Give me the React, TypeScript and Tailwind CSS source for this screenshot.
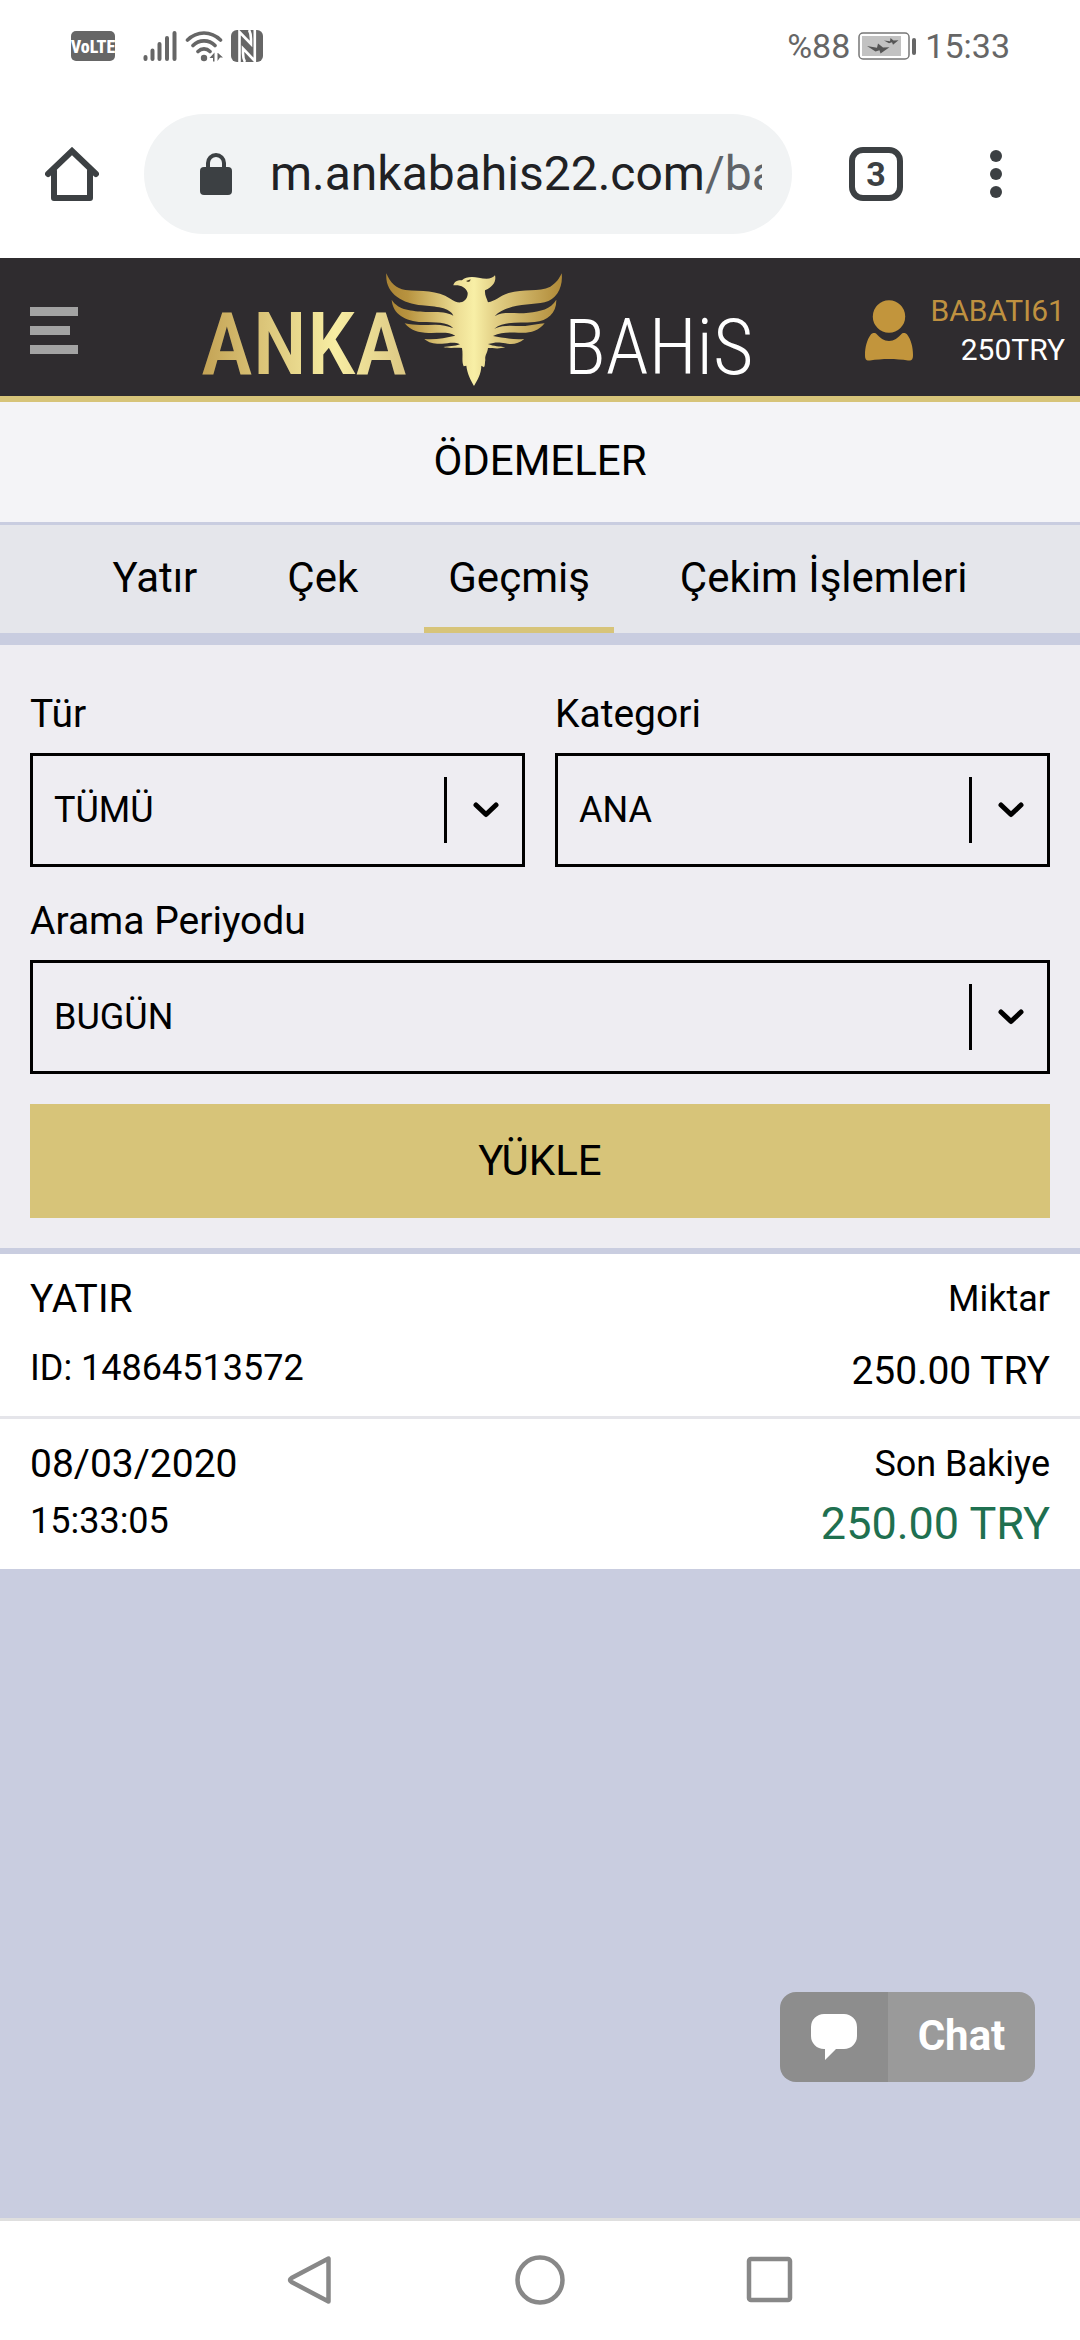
import { useState } from "react";

const tabs = ["Yatır", "Çek", "Geçmiş", "Çekim İşlemleri"];

const SignalIcon = () => (
  <svg width="34" height="32" viewBox="0 0 34 32" stroke="#666" strokeWidth="4" strokeLinecap="round">
    <path d="M2.500 27v2M9.500 20.500v8.500M16.500 14v15M24 8v21M31.500 3v26" />
  </svg>
);

const WifiIcon = () => (
  <svg width="38" height="32" viewBox="0 0 38 32" fill="none" stroke="#666" strokeWidth="3.6" strokeLinecap="round">
    <path d="M2.500 10C12 .6 26 .6 35.500 10M8 15.500C14 9.300 24 9.300 30 15.500M13 21.500C16.500 18 21.500 18 25 21.500" />
    <circle cx="19" cy="28" r="3.200" fill="#666" stroke="none" />
    <path d="M24.500 28l5-5.500v9h-1.500v-3.500zM33 23l5 4.500h-3L32.500 31V23z" fill="#666" stroke="none" />
  </svg>
);

const NfcIcon = () => (
  <svg width="32" height="32" viewBox="0 0 32 32">
    <rect width="32" height="32" rx="6" fill="#666" />
    <path d="M8.500 32V2l11.500 12V9c0-4-.5-6.500-2-9M23.800 0v31L12 18.500V23c0 4 .5 6.500 2 9" fill="none" stroke="#fff" strokeWidth="2.600" />
  </svg>
);

const BatteryIcon = () => (
  <svg width="59" height="30" viewBox="0 0 59 30">
    <rect x="1" y="2" width="50" height="26" rx="4" fill="#fff" stroke="#777" strokeWidth="1.500" />
    <rect x="4" y="5" width="39" height="20" fill="#c2c2c2" />
    <path d="M9 15l10 1.800 1-4.300 5 4 6.500-.3-9 6.300-1-3.200-4 1.200zM26 9.500l6 .8.500-3.300 3 2.500 5-.3-5.500 4.500-1-2.500-3 1z" fill="#555" />
    <rect x="54" y="7" width="4" height="17" rx="2" fill="#666" />
  </svg>
);

const HomeIcon = () => (
  <svg width="54" height="54" viewBox="0 0 54 54" fill="none" stroke="#3c4043" strokeWidth="6" strokeLinejoin="round" strokeLinecap="round">
    <path d="M3 27L27 4l24 23" strokeLinejoin="miter" />
    <path d="M9 24v27h36V24" />
  </svg>
);

const LockIcon = () => (
  <svg className="shrink-0" width="32" height="42" viewBox="0 0 32 42">
    <rect y="14" width="32" height="28" rx="4" fill="#3c4043" />
    <path d="M8 16V10a8 8 0 0 1 16 0v6" fill="none" stroke="#3c4043" strokeWidth="4" />
  </svg>
);

const UserIcon = () => (
  <svg width="48" height="61" viewBox="0 0 48 61" fill="#c2953c">
    <circle cx="24" cy="16.500" r="16.200" />
    <path d="M11 33.500C15 38 19 41 24 41s9-3 13-7.500c2-1 4-.5 5.500 1.500C46 40 48 47 48 55c0 4-1 6-5 5.500-12-2-26-2-38 0C1 61 0 59 0 55c0-8 2-15 5.500-20 1.500-2 3.500-2.500 5.500-1.500z" />
  </svg>
);

const Logo = () => (
  <svg width="550" height="124" viewBox="0 0 550 124" role="img" aria-label="Anka Bahis">
    <defs>
      <linearGradient id="word" x1="0" x2="1">
        <stop offset="0" stopColor="#c3a254" />
        <stop offset="0.65" stopColor="#f7eda3" />
        <stop offset="1" stopColor="#dcc783" />
      </linearGradient>
      <linearGradient id="bird" x1="0" x2="1">
        <stop offset="0" stopColor="#a98334" />
        <stop offset="0.12" stopColor="#b8933f" />
        <stop offset="0.42" stopColor="#efe198" />
        <stop offset="0.5" stopColor="#f8efa6" />
        <stop offset="0.62" stopColor="#e2cf85" />
        <stop offset="1" stopColor="#b08a38" />
      </linearGradient>
    </defs>
    <text x="1" y="106" fontSize="88" fontWeight="500" fill="url(#word)" className="font-['Roboto_Condensed',Lato,sans-serif]">
      ANKA
    </text>
    <path
      transform="translate(182 0) scale(0.3333)"
      fill="url(#bird)"
      d="M13 16C24 44 42 62 70 66C120 70 165 66 205 92C216 100 226 104 236 103C250 100 258 88 257 74C252 58 236 50 214 52C216 42 226 36 240 37C250 26 270 26 290 29C312 34 330 34 339 22C344 40 332 58 309 67C308 82 314 90 318 103C340 100 352 84 380 75C425 62 470 72 505 56C522 46 532 32 539 16C544 58 524 94 488 103C440 112 370 108 338 145C366 128 400 140 440 134C475 130 506 124 523 95C524 134 498 158 458 162C410 166 366 158 337 182C370 168 400 176 430 174C450 172 470 168 488 166C468 192 440 196 410 194C380 193 358 192 333 204C360 208 390 216 427 213C410 228 390 230 370 226C350 222 340 222 318 228C336 236 352 234 370 238C350 244 332 240 318 240C316 256 308 262 310 276C308 284 310 292 306 298L298 293C298 318 286 336 276 354C266 336 256 318 253 293L245 295C238 280 244 262 240 240C220 238 200 242 184 237C200 234 218 236 234 229C216 220 200 226 180 227C160 228 142 226 127 213C160 216 190 210 220 203C200 190 170 196 140 195C110 194 86 188 68 166C100 174 130 170 160 170C180 170 196 174 214 181C196 160 160 164 120 162C70 160 32 138 29 95C50 128 90 128 130 132C160 132 190 130 214 143C204 118 160 116 120 112C60 106 8 76 13 16Z"
    />
    <path transform="translate(182 0) scale(0.3333)" d="M252 39l14-5-2 6-6 2z" fill="#4a3d22" />
    <text x="364" y="106" fontSize="78" fontWeight="300" fill="#fff" className="font-['Roboto_Condensed',Lato,sans-serif]">
      BAHiS
    </text>
  </svg>
);

type FieldProps = { id: string; label: string; options: string[] };

const SelectField = ({ id, label, options }: FieldProps) => (
  <div className="flex flex-1 flex-col gap-4">
    <label htmlFor={id} className="text-[39px] leading-[46px]">
      {label}
    </label>
    <div className="relative">
      <select
        id={id}
        className="h-[114px] w-full appearance-none rounded-none border-[3px] border-black bg-transparent pr-20 pl-[21px] text-[36px]"
      >
        {options.map((option) => (
          <option key={option}>{option}</option>
        ))}
      </select>
      <div className="pointer-events-none absolute inset-y-6 right-0 flex w-[81px] items-center justify-center border-l-[3px] border-black">
        <svg width="26" height="16" viewBox="0 0 26 16" fill="none" stroke="#000" strokeWidth="5" strokeLinecap="round" strokeLinejoin="round">
          <path d="M3 3l10 9.500L23 3" />
        </svg>
      </div>
    </div>
  </div>
);

const StatusBar = () => (
  <div className="flex h-[92px] items-center justify-between pr-[70px] pl-[71px] text-[34px] text-[#666]">
    <div className="flex items-center">
      <span className="mr-7 flex h-[30px] w-11 items-center justify-center rounded-[5px] bg-[#666] font-['Roboto_Condensed',sans-serif] text-[18px] font-extrabold text-white">
        VoLTE
      </span>
      <div className="flex items-center gap-2">
        <SignalIcon />
        <WifiIcon />
        <NfcIcon />
      </div>
    </div>
    <div className="flex items-center gap-2">
      <span>%88</span>
      <BatteryIcon />
      <span>15:33</span>
    </div>
  </div>
);

const BrowserBar = () => (
  <div className="flex h-[166px] items-center pr-[78px] pb-[2px] pl-[45px]">
    <button aria-label="Home" className="mr-[45px]">
      <HomeIcon />
    </button>
    <div className="flex h-[120px] min-w-0 flex-1 items-center rounded-full bg-[#f1f3f4] pr-[30px] pl-14">
      <LockIcon />
      <a href="#" className="ml-[38px] flex-1 overflow-hidden text-[48px] whitespace-nowrap text-[#202124]">
        m.ankabahis22.com<span className="text-[#5f6368]">/ba</span>
      </a>
    </div>
    <button
      aria-label="Tabs"
      className="ml-[57px] flex size-[54px] items-center justify-center rounded-[14px] border-[6px] border-[#3c4043] text-[34px] leading-none font-bold text-[#3c4043]"
    >
      3
    </button>
    <button aria-label="Menu" className="ml-[87px] flex flex-col gap-[6px]">
      <span className="size-3 rounded-full bg-[#3c4043]" />
      <span className="size-3 rounded-full bg-[#3c4043]" />
      <span className="size-3 rounded-full bg-[#3c4043]" />
    </button>
  </div>
);

export default function App() {
  const [activeTab, setActiveTab] = useState("Geçmiş");

  return (
    <div className="flex min-h-screen flex-col bg-white font-[Roboto,sans-serif] text-black">
      <StatusBar />
      <BrowserBar />

      <header className="flex h-36 items-center justify-between border-b-[6px] border-[#d7c479] bg-[#2f2c2f] pt-[6px] pr-[15px] pl-[30px]">
        <button aria-label="Menü" className="flex w-14 flex-col gap-[10px]">
          <span className="h-[9px] w-12 bg-[#a3a3a3]" />
          <span className="h-[9px] w-10 bg-[#a3a3a3]" />
          <span className="h-[9px] w-12 bg-[#a3a3a3]" />
        </button>
        <Logo />
        <a href="#" className="flex items-center gap-[18px]">
          <UserIcon />
          <div className="text-right text-[30px] leading-[39px] text-white">
            <p className="text-[#bf9140]">BABATI61</p>
            <p>250TRY</p>
          </div>
        </a>
      </header>

      <main className="relative flex-1 bg-[#c9cde0]">
        <h1 className="flex h-[120px] items-center justify-center bg-[#f4f4f7] pb-1 text-[42px]">ÖDEMELER</h1>

        <nav className="mt-[3px] flex h-[108px] justify-center gap-[42px] bg-[#e5e6eb]">
          {tabs.map((tab) => (
            <button
              key={tab}
              onClick={() => setActiveTab(tab)}
              className={`border-b-[6px] px-6 pt-[2px] text-[42px] ${
                tab === activeTab ? "border-[#d7c479]" : "border-transparent"
              }`}
            >
              {tab}
            </button>
          ))}
        </nav>

        <form className="mt-3 flex flex-col gap-[30px] bg-[#eeedf2] px-[30px] pt-[46px] pb-[30px]">
          <div className="flex gap-[30px]">
            <SelectField id="type" label="Tür" options={["TÜMÜ"]} />
            <SelectField id="category" label="Kategori" options={["ANA"]} />
          </div>
          <div className="flex pt-px">
            <SelectField id="period" label="Arama Periyodu" options={["BUGÜN"]} />
          </div>
          <button type="button" className="h-[114px] bg-[#d7c479] pb-[2px] text-[42px]">
            YÜKLE
          </button>
        </form>

        <section className="mt-[6px] bg-white text-[36px] leading-[46px]">
          <div className="flex justify-between border-b-[3px] border-[#e5e5ea] px-[30px] pt-[22px] pb-[19px]">
            <div className="flex flex-col gap-[23px]">
              <p className="text-[39px]">YATIR</p>
              <p>ID: 14864513572</p>
            </div>
            <div className="flex flex-col gap-[23px] text-right">
              <p>Miktar</p>
              <p className="text-[39px] leading-[52px]">250.00 TRY</p>
            </div>
          </div>
          <div className="flex justify-between px-[30px] pt-[22px] pb-[19px]">
            <div className="flex flex-col gap-[11px]">
              <p className="text-[39px]">08/03/2020</p>
              <p>15:33:05</p>
            </div>
            <div className="flex flex-col gap-[11px] text-right">
              <p>Son Bakiye</p>
              <p className="text-[45px] leading-[52px] text-[#1f7050]">250.00 TRY</p>
            </div>
          </div>
        </section>

        {/* floating chat widget */}
        <button className="absolute right-[45px] bottom-[136px] flex h-[90px] overflow-hidden rounded-2xl text-white">
          <span className="flex w-[108px] items-center justify-center bg-[#8d8d8d]">
            <svg width="48" height="48" viewBox="0 0 48 48" fill="#fff">
              <path d="M14 1h20a13 13 0 0 1 13 13v9a13 13 0 0 1-13 13h-8L15 47V36h-1A13 13 0 0 1 1 23v-9A13 13 0 0 1 14 1z" />
            </svg>
          </span>
          <span className="flex w-[147px] items-center justify-center bg-[#9a9a9a] pb-1 text-[42px] font-bold">
            Chat
          </span>
        </button>
      </main>

      <footer className="flex h-[122px] items-center justify-center gap-[180px] border-t-[3px] border-[#dfdfdf] pb-[2px]">
        <button aria-label="Back">
          <svg width="50" height="50" viewBox="0 0 50 50" fill="none" stroke="#888" strokeWidth="4.500" strokeLinejoin="round">
            <path d="M43.500 3.500v43L6.500 27q-3-2 0-4z" />
          </svg>
        </button>
        <button aria-label="Home screen">
          <svg width="50" height="50" viewBox="0 0 50 50" fill="none" stroke="#888" strokeWidth="4.500">
            <circle cx="25" cy="25" r="22.500" />
          </svg>
        </button>
        <button aria-label="Recents">
          <svg width="50" height="50" viewBox="0 0 50 50" fill="none" stroke="#888" strokeWidth="4.500">
            <rect x="4" y="4" width="41" height="41" rx="2" />
          </svg>
        </button>
      </footer>
    </div>
  );
}
